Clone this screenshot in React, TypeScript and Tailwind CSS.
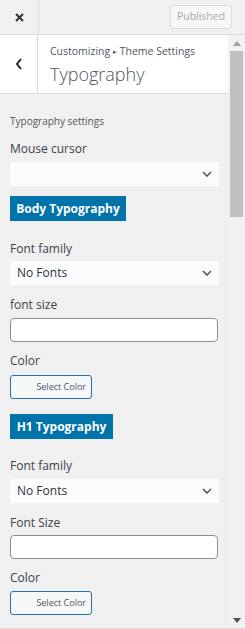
import React from "react";

const font = { fontFamily: '"Open Sans", "Noto Sans", sans-serif' };

const Chevron = () => (
  <svg width="10" height="6" viewBox="0 0 10 6" className="text-[#50575e]">
    <polyline points="1,1 5,5 9,1" fill="none" stroke="currentColor" strokeWidth="1.6" />
  </svg>
);

const SelectBox = ({ value }: { value?: string }) => (
  <div className="flex items-center justify-between h-[24px] w-[209px] bg-[#fbfcfe] pl-[7px] pr-[7px] text-[12px] text-[#2c3338]">
    <span>{value}</span>
    <Chevron />
  </div>
);

const Label = ({ children }: { children: React.ReactNode }) => (
  <div className="text-[12px] leading-[16px] text-[#3c434a]">{children}</div>
);

const TextInput = () => (
  <div className="h-[24px] w-[208px] rounded-[4px] border border-[#8c8f94] bg-white" />
);

const ColorButton = () => (
  <div className="flex h-[24px] w-[82px] items-center justify-end rounded-[3px] border border-[#2271b1] bg-[#f6f7f7] pr-[5px] text-[9px] text-[#50575e]">
    Select Color
  </div>
);

const BlueButton = ({ children, w }: { children: React.ReactNode; w: string }) => (
  <div className={`flex h-[25px] ${w} items-center justify-center bg-[#0073aa] text-[12px] font-bold text-white`}>
    {children}
  </div>
);

export default function App() {
  return (
    <div style={font} className="flex h-[629px] w-[245px] flex-col overflow-hidden border-b border-[#dcdcde] bg-[#f0f0f1]">
      {/* top bar */}
      <div className="flex h-[35px] shrink-0 items-center border-b border-[#dcdcde]">
        <div className="flex h-full w-[39px] items-center justify-center border-r border-[#dcdcde]">
          <svg width="9" height="9" viewBox="0 0 9 9">
            <path d="M1 1 L8 8 M8 1 L1 8" stroke="#2c3338" strokeWidth="2" />
          </svg>
        </div>
        <div className="flex-1" />
        <div className="mr-[13px] flex h-[24px] w-[62px] items-center justify-center rounded-[3px] border border-[#dcdcde] bg-[#f6f7f7] text-[10.5px] text-[#a7aaad]">
          Published
        </div>
      </div>

      <div className="flex min-h-0 flex-1">
        <div className="flex min-w-0 flex-1 flex-col">
          {/* section header */}
          <div className="flex h-[59px] shrink-0 border-b border-[#dcdcde] bg-white">
            <div className="flex w-[38px] items-center justify-center border-r border-[#dcdcde]">
              <svg width="8" height="12" viewBox="0 0 8 12">
                <polyline points="6,1 2,6 6,11" fill="none" stroke="#1d2327" strokeWidth="2" />
              </svg>
            </div>
            <div className="flex flex-col pl-[12px] pt-[9px]">
              <div className="text-[10.5px] leading-[14px] text-[#50575e]">
                Customizing <span className="text-[7px] align-[1px]">▸</span> Theme Settings
              </div>
              <div className="mt-[4px] text-[18px] font-light leading-[22px] text-[#50575e]">Typography</div>
            </div>
          </div>

          {/* controls */}
          <div className="flex flex-col pl-[10px] pt-[20px]">
            <div className="text-[10px] leading-[14px] text-[#50575e]">Typography settings</div>
            <div className="mt-[13px]">
              <Label>Mouse cursor</Label>
            </div>
            <div className="mt-[5px]">
              <SelectBox />
            </div>
            <div className="mt-[10px]">
              <BlueButton w="w-[116px]">Body Typography</BlueButton>
            </div>

            <div className="mt-[20px]">
              <Label>Font family</Label>
            </div>
            <div className="mt-[4px]">
              <SelectBox value="No Fonts" />
            </div>
            <div className="mt-[12px]">
              <Label>font size</Label>
            </div>
            <div className="mt-[5px]">
              <TextInput />
            </div>
            <div className="mt-[11px]">
              <Label>Color</Label>
            </div>
            <div className="mt-[6px]">
              <ColorButton />
            </div>

            <div className="mt-[15px]">
              <BlueButton w="w-[103px]">H1 Typography</BlueButton>
            </div>
            <div className="mt-[19px]">
              <Label>Font family</Label>
            </div>
            <div className="mt-[5px]">
              <SelectBox value="No Fonts" />
            </div>
            <div className="mt-[12px]">
              <Label>Font Size</Label>
            </div>
            <div className="mt-[4px]">
              <TextInput />
            </div>
            <div className="mt-[11px]">
              <Label>Color</Label>
            </div>
            <div className="mt-[5px]">
              <ColorButton />
            </div>
          </div>
        </div>

        {/* scrollbar */}
        <div className="flex w-[17px] shrink-0 flex-col items-center bg-[#f1f1f1]">
          <svg width="8" height="5" viewBox="0 0 8 5" className="mt-[6px]">
            <polygon points="0,5 4,0 8,5" fill="#a3a3a3" />
          </svg>
          <div className="mt-[5px] h-[166px] w-[13px] bg-[#c1c1c1]" />
          <div className="flex-1" />
          <svg width="8" height="5" viewBox="0 0 8 5" className="mb-[5px]">
            <polygon points="0,0 8,0 4,5" fill="#505050" />
          </svg>
        </div>
      </div>
    </div>
  );
}
